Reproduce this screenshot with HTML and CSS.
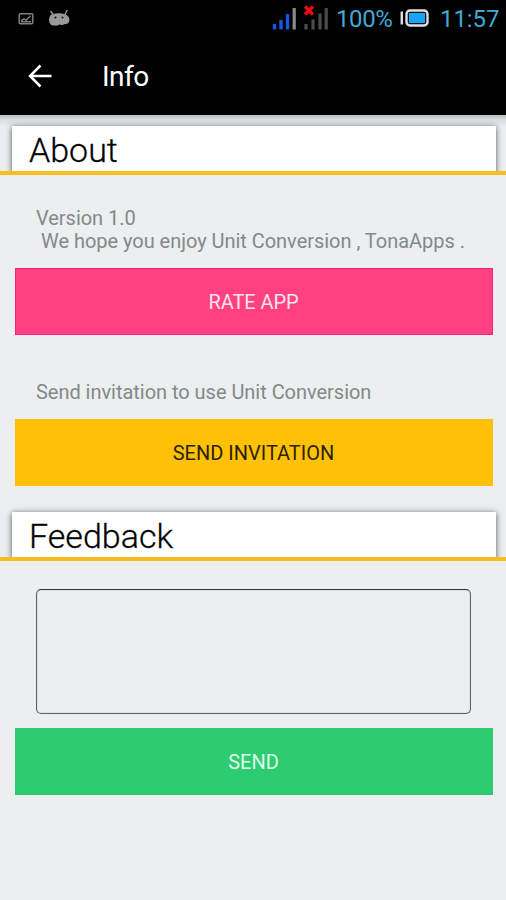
FILE: index.html
```html
<!DOCTYPE html>
<html lang="en">
<head>
<meta charset="utf-8">
<title>Info</title>
<link rel="stylesheet" href="styles.css">
</head>
<body>
<div class="status">
  <svg class="status-icons" width="60" height="24" viewBox="0 0 60 24">
    <rect x="2.200" y="6.700" width="13.600" height="10" rx="1.200" fill="none" stroke="#808080" stroke-width="1.500"/>
    <path d="M4 13.800l3-2 2 1.500 4.500-4.500M4 14.800h10" fill="none" stroke="#808080" stroke-width="1.400"/>
    <path d="M34 4.500l2 3M50 3.500l-2 4" stroke="#999" stroke-width="1.400" stroke-linecap="round"/>
    <path d="M34.500 7.500q7-2.500 14 0q4 1.500 4 6q-1 4-4.500 3.500q-3 1.500-5.500 0.500q-2 1.500-5 1q-4 0.500-5-3q-1-3 0-5q0-2 2-3z" fill="#999"/>
    <circle cx="38.500" cy="10.500" r="1" fill="#111"/><circle cx="45.500" cy="10.500" r="1" fill="#111"/>
  </svg>
  <svg class="signals" width="58" height="32" viewBox="0 0 58 32">
    <path d="M4.500 24v5.500M11 20v9.500M17.500 14v15.500" stroke="#1558e0" stroke-width="3.400"/>
    <path d="M24.200 8v21.500" stroke="#8b8b86" stroke-width="3.200"/>
    <path d="M36 24v5.500M43 19.500v10M50 13.500v16M56.200 8v21.500" stroke="#4c4c4c" stroke-width="3.200"/>
    <path d="M35 6.500l8 8M43 6.500l-8 8" stroke="#f40b12" stroke-width="3.200"/>
  </svg>
  <span class="percent">100%</span>
  <svg class="battery" width="29" height="18" viewBox="0 0 29 18">
    <path d="M1.800 2.500v13" stroke="#ddd" stroke-width="2.500"/>
    <rect x="6.500" y="1.500" width="21" height="15" rx="3.500" fill="#111" stroke="#e0e0e0" stroke-width="2.400"/>
    <rect x="9" y="4" width="16" height="10" fill="#16a5f8"/>
  </svg>
  <span class="clock">11:57</span>
</div>
<header class="toolbar">
  <svg width="24" height="24" viewBox="0 0 24 24"><path d="M23.500 12H2.500M12.500 1.500L2 12l10.500 10.500" fill="none" stroke="#fff" stroke-width="2.500"/></svg>
  <h1>Info</h1>
</header>
<main>
  <section class="about">
    <div class="heading"><h2>About</h2></div>
    <p class="version">Version 1.0<br><span class="hope">We hope you enjoy Unit Conversion , TonaApps .</span></p>
    <button class="pink">RATE APP</button>
    <p class="invite">Send invitation to use Unit Conversion</p>
    <button class="amber">SEND INVITATION</button>
  </section>
  <section class="feedback">
    <div class="heading"><h2>Feedback</h2></div>
    <textarea aria-label="Feedback"></textarea>
    <button class="green">SEND</button>
  </section>
</main>
</body>
</html>
```
FILE: styles.css
```css
* { box-sizing: border-box; }
body {
  margin: 0;
  height: 900px;
  overflow: hidden;
  background: #ebeff0;
  font-family: Roboto, "Liberation Sans", sans-serif;
}
.status {
  display: flex;
  align-items: center;
  height: 38px;
  padding: 0 8px 0 17px;
  background: #000;
  color: #42a8d4;
  font-size: 24px;
  white-space: nowrap;
}
.signals { margin: 0 8px 0 auto; align-self: flex-start; }
.percent { width: 55px; letter-spacing: -0.4px; font-weight: 400; }
.battery { margin: 0 11px 2px 9px; }
.clock { width: 58px; letter-spacing: -0.1px; font-weight: 400; }
.toolbar {
  display: flex;
  align-items: center;
  gap: 50px;
  height: 77px;
  padding: 0 0 1px 28px;
  background: #000;
  color: #fff;
}
h1 { margin: 0; font-size: 28px; font-weight: 400; letter-spacing: -0.5px; }
main {
  height: 785px;
  padding-top: 11px;
  background: linear-gradient(#b8babb, #d8dbdc 4px, #ebeff0 12px);
}
.heading {
  box-sizing: content-box;
  height: 45px;
  margin-top: -8px;
  padding: 8px 10px 0 12px;
  border-bottom: 4px solid #fbbd1c;
  overflow: hidden;
}
h2 {
  height: 50px;
  margin: 0;
  padding-left: 17px;
  background: #fff;
  box-shadow: 0 1px 6px rgba(0,0,0,.65);
  color: #000;
  font-size: 34px;
  line-height: 48px;
  font-weight: 300;
  -webkit-text-stroke: 0.3px #111;
}
p { margin: 0; padding-left: 36px; color: #858889; font-size: 20px; line-height: 23px; letter-spacing: -0.03px; white-space: nowrap; }
.version { padding-top: 32px; height: 93px; }
.hope { margin-left: 5px; }
.invite { height: 84px; padding-top: 46px; }
button {
  display: block;
  width: 478px;
  height: 67px;
  margin: 0 0 0 14.500px;
  padding: 1px 0 0;
  border: 0;
  font: 400 20px/67px Roboto, sans-serif;
}
.pink { background: #ff4081; color: #ffe2eb; border: 1px solid #f52475; line-height: 65px; letter-spacing: -0.1px; }
.amber { background: #ffc107; color: #2c2200; }
.green { background: #2ecc71; color: #dffbea; }
.feedback { margin-top: 26px; }
textarea {
  display: block;
  width: 435px;
  height: 125px;
  margin: 28px 0 14px 36px;
  border: 1px solid #5d6162;
  border-top-color: #343738;
  border-radius: 5px;
  background: transparent;
  box-shadow: inset 0 0 1px #777;
  resize: none;
}
```
